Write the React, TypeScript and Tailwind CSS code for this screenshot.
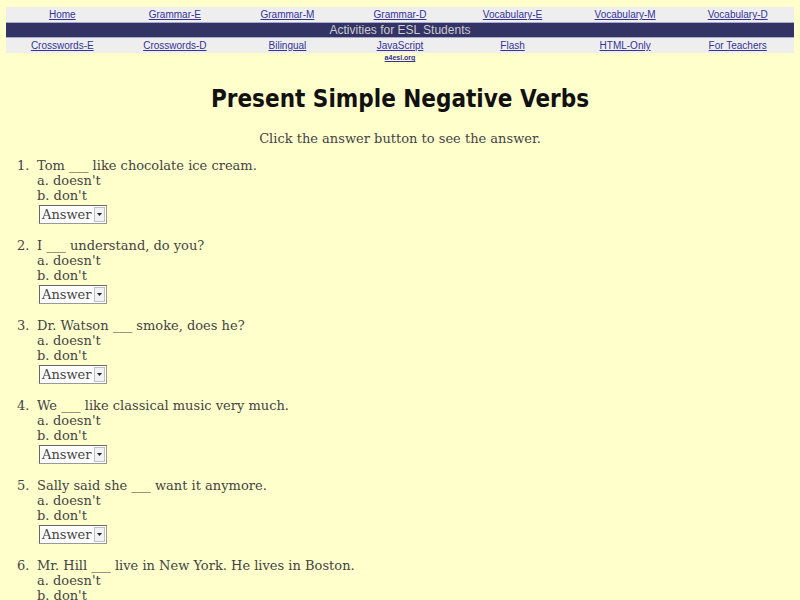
const topLinks = ["Home", "Grammar-E", "Grammar-M", "Grammar-D", "Vocabulary-E", "Vocabulary-M", "Vocabulary-D"];
const bottomLinks = ["Crosswords-E", "Crosswords-D", "Bilingual", "JavaScript", "Flash", "HTML-Only", "For Teachers"];

const questions = [
  "Tom ___ like chocolate ice cream.",
  "I ___ understand, do you?",
  "Dr. Watson ___ smoke, does he?",
  "We ___ like classical music very much.",
  "Sally said she ___ want it anymore.",
  "Mr. Hill ___ live in New York. He lives in Boston.",
];

function AnswerBox() {
  return (
    <div className="ml-[2px] mt-[2px] inline-flex h-[19px] items-center border border-[#999] border-l-[#666] border-t-[#666] bg-white pl-[2px] pr-[1px]">
      <span className="text-[13px] leading-none text-[#444]">Answer</span>
      <span className="ml-[3px] flex h-[15px] w-[11px] items-center justify-center border border-[#c0c0c0] bg-[#f2f2f2]">
        <svg width="5" height="3" viewBox="0 0 5 3">
          <path d="M0 0h5L2.5 3z" fill="#222" />
        </svg>
      </span>
    </div>
  );
}

export default function App() {
  return (
    <div className="min-h-[600px] w-full bg-[#ffffcc] pt-[7px]" style={{ fontFamily: '"DejaVu Serif", serif' }}>
      {/* Nav */}
      <div className="mx-[6px]" style={{ fontFamily: '"Liberation Sans", Arial, sans-serif' }}>
        <div className="grid h-[15px] grid-cols-7 bg-[#eeeeee]">
          {topLinks.map((l) => (
            <a key={l} className="text-center text-[10px] leading-[15px] text-[#333399] underline">
              {l}
            </a>
          ))}
        </div>
        <div className="h-[16px] border-y border-[#aaaacc] bg-[#333366] text-center text-[12px] leading-[14px] text-[#cccccc]">
          Activities for ESL Students
        </div>
        <div className="grid h-[15px] grid-cols-7 bg-[#eeeeee]">
          {bottomLinks.map((l) => (
            <a key={l} className="text-center text-[10px] leading-[15px] text-[#333399] underline">
              {l}
            </a>
          ))}
        </div>
        <div className="grid grid-cols-7">
          <div className="col-start-4 text-center text-[7px] font-bold leading-[9px] text-[#333399] underline">a4esl.org</div>
        </div>
      </div>

      {/* Title */}
      <h1
        className="mt-[22px] text-center text-[24px] font-bold leading-[30px] text-[#111]"
        style={{ fontFamily: '"DejaVu Sans Condensed", "DejaVu Sans", sans-serif' }}
      >
        Present Simple Negative Verbs
      </h1>
      <p className="mt-[17px] text-center text-[13px] leading-[16px] text-[#444]">Click the answer button to see the answer.</p>

      {/* Questions */}
      <ol className="mt-[11px] pl-[17px] text-[13px] leading-[15px] text-[#444]">
        {questions.map((q, i) => (
          <li key={q} className="mb-[14px] flex">
            <span className="w-[20px] shrink-0">{i + 1}.</span>
            <div className="flex flex-col items-start">
              <span>{q}</span>
              <span>a. doesn't</span>
              <span>b. don't</span>
              <AnswerBox />
            </div>
          </li>
        ))}
      </ol>
    </div>
  );
}
